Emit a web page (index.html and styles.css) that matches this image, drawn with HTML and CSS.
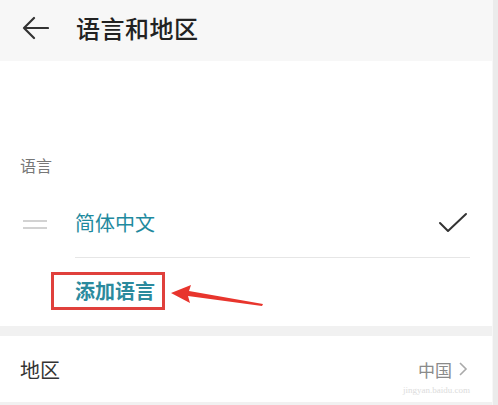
FILE: index.html
```html
<!DOCTYPE html>
<html lang="zh-CN">
<head>
<meta charset="utf-8">
<link rel="stylesheet" href="styles.css">
</head>
<body>
<div class="app">
  <div class="main">
    <header class="topbar">
      <svg class="back" width="28" height="24" viewBox="0 0 28 24"><path d="M13 2 L3 12 L13 22 M3 12 H27" fill="none" stroke="#333" stroke-width="2.2" stroke-linecap="round" stroke-linejoin="round"/></svg>
      <h1 class="title">语言和地区</h1>
    </header>
    <section class="card lang">
      <div class="label">语言</div>
      <div class="item">
        <span class="handle"><i></i><i></i></span>
        <span class="item-text">简体中文</span>
        <svg class="check" width="30" height="22" viewBox="0 0 30 22"><path d="M2 11 L10 19 L28 2" fill="none" stroke="#333" stroke-width="2" stroke-linecap="round" stroke-linejoin="round"/></svg>
      </div>
      <div class="add-row">
        <span class="add">添加语言</span>
        <svg class="arrow" width="100" height="24" viewBox="0 0 100 24"><path d="M2 9 L22 1 L20 7 L94 20 L93 22 L19 12 L21 19 Z" fill="#e8352d"/></svg>
      </div>
    </section>
    <section class="card region">
      <span class="region-label">地区</span>
      <span class="region-value">
        <span class="val">中国</span>
        <svg width="10" height="16" viewBox="0 0 10 16"><path d="M2 2 L8 8 L2 14" fill="none" stroke="#aaa" stroke-width="1.6"/></svg>
        <span class="wm-url">jingyan.baidu.com</span>
      </span>
    </section>
  </div>
  <div class="edge"></div>
</div>
</body>
</html>
```
FILE: styles.css
```css
* { box-sizing: border-box; margin: 0; padding: 0; }
html, body { width: 498px; height: 405px; overflow: hidden; }
body {
  background: #f2f2f2;
  font-family: "Noto Sans CJK SC", "Noto Sans", sans-serif;
}
.app { display: flex; height: 405px; }
.main { width: 492px; background: #f1f1f1; }
.edge { width: 6px; background: #ebebeb; border-left: 1px solid #f7f7f7; }

.topbar {
  height: 61px;
  background: #f7f7f7;
  display: flex;
  align-items: center;
  padding-left: 21px;
  padding-bottom: 6px;
}
.back { margin-right: 27px; }
.title {
  font-size: 24px;
  font-weight: 500;
  color: #222;
  letter-spacing: 0.5px;
}

.card { background: #fff; }
.lang {
  height: 265px;
  padding-top: 92px;
  position: relative;
}
.label {
  font-size: 16px;
  color: #777;
  padding-left: 20px;
  line-height: 24px;
}
.item {
  display: flex;
  align-items: center;
  height: 65px;
  margin-top: 16px;
  margin-right: 22px;
  border-bottom: 1px solid #e6e6e6;
  margin-left: 75px;
  position: relative;
}
.handle {
  position: absolute;
  left: -52px;
  top: 27px;
  width: 24px;
  display: flex;
  flex-direction: column;
  gap: 5px;
}
.handle i { display: block; height: 2px; background: #d2d2d2; }
.item-text {
  font-size: 20px;
  color: #1f8a9e;
  flex: 1;
  padding-bottom: 5px;
}
.check { margin-right: 2px; margin-bottom: 4px; }

.add-row {
  display: flex;
  align-items: center;
  margin-left: 51px;
  margin-top: 14px;
  position: relative;
}
.add {
  display: inline-block;
  border: 3px solid #e0403c;
  width: 114px;
  height: 38px;
  padding-left: 21px;
  font-size: 20px;
  font-weight: 700;
  color: #2b8a9d;
  line-height: 31px;
}
.arrow {
  position: absolute;
  left: 118px;
  top: 12px;
}

.region {
  margin-top: 10px;
  height: 66px;
  display: flex;
  align-items: center;
  justify-content: space-between;
  padding: 0 24px 0 20px;
}
.region-label { font-size: 20px; color: #333; }
.region-value {
  position: relative;
  display: flex;
  align-items: center;
  gap: 6px;
}
.val { font-size: 17px; color: #8a8a8a; }
.wm-url {
  position: absolute;
  right: -2px;
  top: 28px;
  font-family: "Liberation Serif", serif;
  font-size: 9px;
  color: #dcdcdc;
  white-space: nowrap;
}
```
